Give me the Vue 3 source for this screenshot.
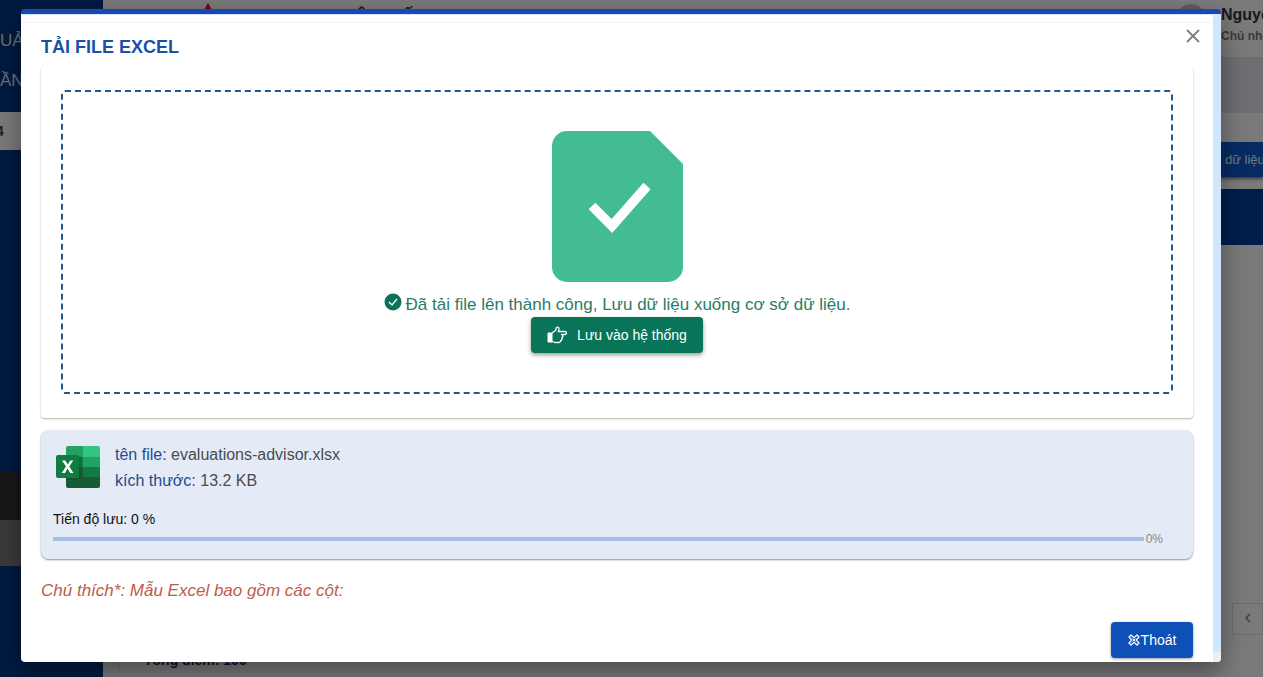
<script setup>
import { ref } from 'vue'

const file = ref({ name: 'evaluations-advisor.xlsx', size: '13.2 KB' })
const progress = ref(0)
</script>

<template>
  <div class="page">
    <aside class="sidebar">
      <p class="side-label">UẢN</p>
      <p class="side-label">ẦN</p>
      <div class="side-select">4</div>
      <div class="side-group"></div>
      <div class="side-item"></div>
    </aside>
    <main class="main">
      <header class="topbar">
        <svg class="mark" width="12" height="10" viewBox="0 0 12 10"><path d="M6 0 12 10H0Z" fill="#e01030" /></svg>
        <h1 class="top-title">HỆ THỐNG</h1>
        <span class="avatar"></span>
        <div class="user">
          <strong>Nguyễn</strong>
          <span>Chủ nhiệm</span>
        </div>
      </header>
      <div class="band"></div>
      <div class="toolbar"><button class="data-btn" type="button">dữ liệu</button></div>
      <div class="table-head"></div>
      <div class="pager">
        <button type="button" aria-label="Trang trước">
          <svg width="10" height="12" viewBox="0 0 10 12"><path d="M7 2 3 6 7 10" fill="none" stroke="#777" stroke-width="1.500" /></svg>
        </button>
      </div>
      <p class="total">Tổng điểm: 100</p>
    </main>

    <div class="backdrop"></div>

    <section class="dialog" role="dialog" aria-modal="true" aria-labelledby="dialog-title">
      <div class="content">
        <div class="heading">
          <h2 id="dialog-title">TẢI FILE EXCEL</h2>
          <button class="close" type="button" aria-label="Đóng">
            <svg width="14" height="14" viewBox="0 0 14 14"><path d="m1 1 12 12M13 1 1 13" fill="none" stroke="#808285" stroke-width="2" /></svg>
          </button>
        </div>

        <div class="card">
          <div class="dropzone">
            <svg class="doc" width="131" height="151" viewBox="0 0 131 151">
              <path d="M15 0H98L131 33V136a15 15 0 0 1-15 15H15A15 15 0 0 1 0 136V15A15 15 0 0 1 15 0Z" fill="#43bc94" />
              <path d="m40 75 20 20 35-40" fill="none" stroke="#fff" stroke-width="9.500" />
            </svg>
            <p class="success">
              <svg width="18" height="18" viewBox="0 0 18 18">
                <circle cx="9" cy="9" r="8.500" fill="#0b7357" />
                <path d="m5 9 3 3 5-6" fill="none" stroke="#fff" stroke-width="1.300" />
              </svg>
              <span>Đã tải file lên thành công, Lưu dữ liệu xuống cơ sở dữ liệu.</span>
            </p>
            <button class="save" type="button">
              <svg width="20" height="18" viewBox="0 0 20 18">
                <path d="M1 7h4v9H1Z" fill="#fff" stroke="#fff" />
                <path d="M5 7 8.500 4.500 9.500 1.500q1.500-1 2.300.5.500 1.500-.6 3.500H18q1.500.2 1.500 1.500T18 8.500h-3.500q1.500.5 1.300 2-.2 1-1 1.300.7 1-.1 2-.4.600-1 .7.200 1.700-1.700 2H9Q7 16.500 5 15.500" fill="none" stroke="#fff" stroke-width="1.300" stroke-linejoin="round" />
              </svg>
              <span>Lưu vào hệ thống</span>
            </button>
          </div>
        </div>

        <div class="file-card">
          <div class="file">
            <svg width="44" height="42" viewBox="0 0 44 42">
              <path d="M27 0h15q2 0 2 2v9H27Z" fill="#33c481" />
              <path d="M10 2q0-2 2-2h15v11H10Z" fill="#21a366" />
              <path d="M10 11h17v10H10Z" fill="#107c41" />
              <path d="M27 11h17v10H27Z" fill="#21a366" />
              <path d="M10 21h17v11H10Z" fill="#185c37" />
              <path d="M27 21h17v11H27Z" fill="#107c41" />
              <path d="M10 31h34v9q0 2-2 2H12q-2 0-2-2Z" fill="#185c37" />
              <path d="M10 10h13q2 0 2 2v20q0 2-2 2H10Z" fill="#0b4a2b" opacity=".35" />
              <rect y="9" width="23" height="23" rx="2" fill="#107c41" />
              <path d="m6 14.500 4 6-4.300 6.500H9l2.600-4.400 2.700 4.400h3.200l-4.200-6.500 4-6h-3l-2.500 4-2.500-4Z" fill="#fff" />
            </svg>
            <div class="meta">
              <p><b>tên file:</b> {{ file.name }}</p>
              <p><b>kích thước:</b> {{ file.size }}</p>
            </div>
          </div>
          <p class="progress-label">Tiến độ lưu: {{ progress }} %</p>
          <div class="progress">
            <div class="track"><div class="bar" :style="{ width: progress + '%' }"></div></div>
            <span>{{ progress }}%</span>
          </div>
        </div>

        <p class="note">Chú thích*: Mẫu Excel bao gồm các cột:</p>

        <div class="actions">
          <button class="exit" type="button">
            <svg width="12" height="12" viewBox="0 0 12 12">
              <path d="M3 1 6 3.700 9 1l2 2-2.700 3L11 9l-2 2-3-2.700L3 11 1 9l2.700-3L1 3Z" fill="none" stroke="#fff" stroke-width="1.200" stroke-linejoin="round" />
              <path d="m4.500 4.500 3 3m0-3-3 3" stroke="#fff" />
            </svg>
            <span>Thoát</span>
          </button>
        </div>
      </div>
      <div class="scrollbar"><div class="thumb"></div></div>
    </section>
  </div>
</template>

<style>
html, body { overflow: hidden; }
</style>

<style scoped>
* { box-sizing: border-box; }
.page {
  position: relative;
  display: flex;
  height: 100vh;
  overflow: hidden;
  background: #f4f4f4;
  font-family: "Liberation Sans", Arial, sans-serif;
}
p, h1, h2 { margin: 0; }
button { font-family: inherit; border: 0; padding: 0; cursor: pointer; }

.sidebar { flex: none; width: 103px; padding-top: 21px; background: #003580; }
.side-label { height: 40px; font-size: 17px; line-height: 40px; color: #ddd; }
.side-select { height: 38px; margin-top: 11px; background: #f4f4f4; font-size: 14px; line-height: 38px; font-weight: 700; color: #444; text-indent: -4px; }
.side-group { height: 49px; margin-top: 321px; background: #303030; }
.side-item { height: 46px; background: #747474; }

.main { flex: 1; min-width: 0; display: flex; flex-direction: column; }
.topbar { display: flex; flex: none; height: 57px; padding: 4px 0 0 99px; }
.mark { margin-top: -1px; }
.top-title { flex: 1; margin-left: 126px; font-size: 20px; line-height: 28px; color: #1c2f5c; }
.avatar { width: 28px; height: 28px; border-radius: 50%; background: #b8b8c0; }
.user { width: 42px; margin-left: 16px; white-space: nowrap; color: #777; font-size: 12px; font-weight: 700; line-height: 20px; }
.user strong { display: block; font-size: 16px; line-height: 22px; color: #333; }
.band { flex: none; height: 56px; background: #d9dce2; }
.toolbar { display: flex; flex: none; justify-content: flex-end; height: 76px; padding-top: 29px; }
.data-btn { width: 62px; height: 35px; padding-left: 24px; text-align: left; white-space: nowrap; font-size: 13px; color: #eee; background: #0b57c4; box-shadow: 0 2px 3px #777; }
.table-head { flex: none; height: 56px; background: #003a94; }
.pager { display: flex; flex: none; justify-content: flex-end; margin-top: 358px; }
.pager button { width: 31px; height: 32px; border: 1px solid #d8d8d8; background: #f4f4f4; }
.total { margin: 15px 0 0 15px; padding-left: 25px; border-left: 1px solid #ccc; font-size: 14px; font-weight: 700; line-height: 20px; color: #203060; }

.backdrop { position: absolute; inset: 0; background: rgba(0, 0, 0, .5); }

.dialog {
  position: absolute;
  inset: 9px 42px 15px 21px;
  display: flex;
  border-top: 5px solid #1a48b2;
  border-radius: 4px;
  background: #fff;
  overflow: hidden;
  box-shadow: 0 10px 24px rgba(0, 0, 0, .4);
}
.content { flex: 1; min-width: 0; padding: 7px 20px 0; border-top: 1px solid #d4e5ff; }
.scrollbar { flex: none; width: 8px; padding-bottom: 10px; background: #eee; }
.thumb { height: 100%; background: #d0e6fc; }

.heading { display: flex; align-items: flex-start; justify-content: space-between; height: 44px; margin: 0 -20px; padding: 6px 13px 0 20px; border-top: 1px solid #f3f3f3; }
.heading h2 { padding-top: 6px; font-size: 18px; line-height: 24px; font-weight: 700; color: #1b50a8; }
.close { width: 14px; height: 14px; background: none; }
.close svg { display: block; }

.card { padding: 24px 20px; border-radius: 4px; box-shadow: 0 1px 2px rgba(0, 0, 0, .3); }
.dropzone { display: flex; flex-direction: column; align-items: center; height: 304px; padding-top: 39px; border: 2px dashed #22598f; border-radius: 4px; }
.doc { flex: none; }
.success { display: flex; gap: 4px; margin-top: 11px; font-size: 17px; line-height: 24px; color: #287d66; }
.save { display: flex; align-items: center; gap: 10px; height: 36px; padding: 0 16px; border-radius: 4px; background: #087559; font-size: 14px; color: #fff; box-shadow: 0 2px 4px rgba(0, 0, 0, .4); }

.file-card { margin-top: 12px; padding: 12px 30px 10px 12px; border-radius: 8px; background: #e4ebf6; box-shadow: 0 1px 2px rgba(0, 0, 0, .45); }
.file { display: flex; gap: 15px; padding-left: 3px; }
.file svg { margin-top: 4px; }
.meta { font-size: 16px; line-height: 26px; color: #484c52; }
.meta b { font-weight: 400; color: #244a8f; }
.progress-label { margin-top: 15px; font-size: 14px; line-height: 20px; color: #111; }
.progress { display: flex; align-items: center; gap: 2px; font-size: 12px; line-height: 20px; color: #85888e; }
.track { flex: 1; height: 4px; background: #a3bfe5; }
.bar { height: 100%; background: #1a48b2; }
.note { margin-top: 20px; font-size: 17px; line-height: 24px; font-style: italic; color: #c05b4c; }
.actions { display: flex; justify-content: flex-end; margin-top: 19px; }
.exit { display: flex; align-items: center; justify-content: center; gap: 1px; width: 82px; height: 36px; border-radius: 4px; background: #0c50b8; font-size: 14px; color: #fff; box-shadow: 0 1px 3px rgba(0, 0, 0, .4); }
</style>
